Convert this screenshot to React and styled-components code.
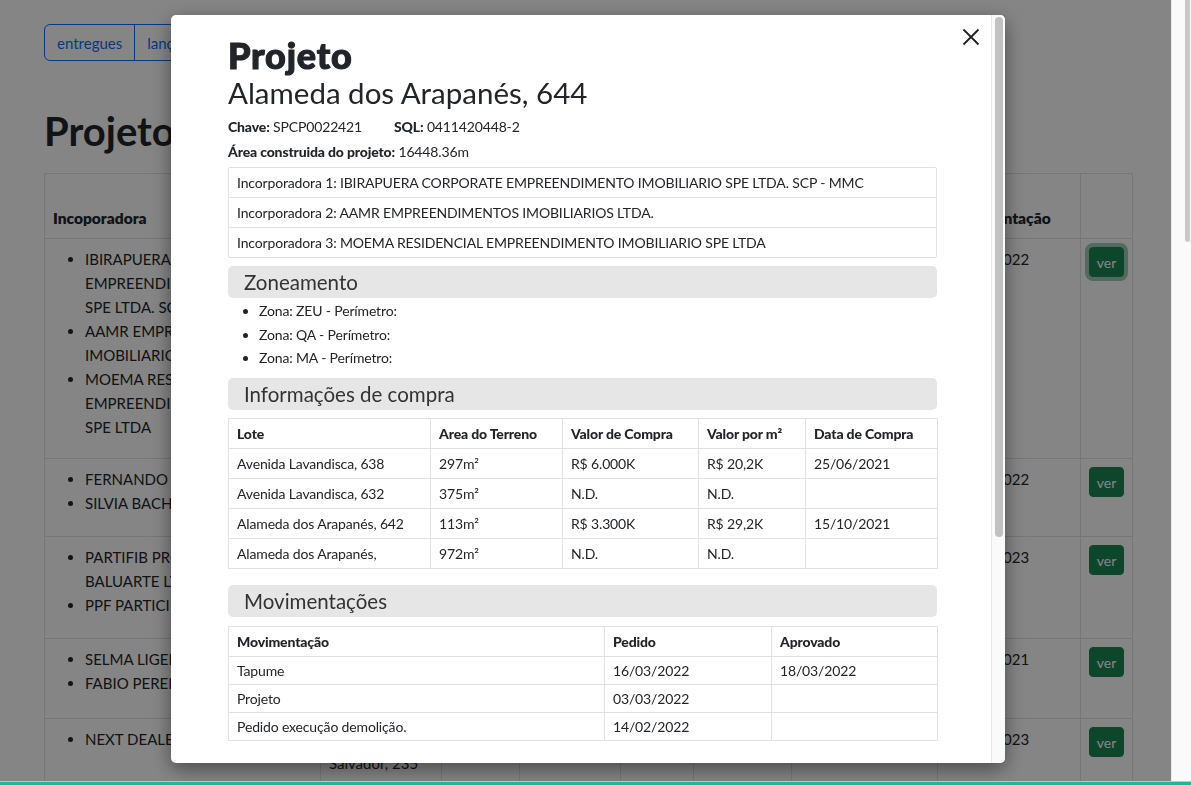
import React from 'react';
import styled, { createGlobalStyle } from 'styled-components';

const GlobalStyle = createGlobalStyle`
  html, body { margin: 0; height: 100%; overflow: hidden; }
  body {
    font-family: Lato, "Noto Sans", sans-serif;
    color: #212529;
    background: #fff;
  }
  * { box-sizing: border-box; }
`;

const Screen = styled.div`
  display: flex;
  width: 1191px;
  height: 785px;
  overflow: hidden;
`;

const Page = styled.main`
  flex: 1;
  min-width: 0;
  padding: 24px 0 0 44px;
  overflow: hidden;
`;

const PageScrollbar = styled.div`
  width: 20px;
  background: #fafafa;
  border-left: 1px solid #ececec;
  display: flex;
  justify-content: flex-end;
  padding-right: 1px;
`;

const PageThumb = styled.div`
  width: 5px;
  height: 242px;
  border-radius: 0 0 3px 3px;
  background: #c9c9c9;
`;

const BtnGroup = styled.div`
  display: inline-flex;
`;

const OutlineBtn = styled.button`
  font-family: inherit;
  font-size: 15px;
  line-height: 24px;
  padding: 5.5px 12px;
  color: #0d6efd;
  background: transparent;
  border: 1px solid #0d6efd;
  margin-left: -1px;
  &:first-child { margin-left: 0; border-radius: 6px 0 0 6px; }
  &:last-child { border-radius: 0 6px 6px 0; }
`;

const PageTitle = styled.h1`
  font-size: 40px;
  font-weight: 700;
  line-height: 48px;
  margin: 46px 0 18px;
`;

const BgTable = styled.table`
  width: 1088px;
  border-collapse: collapse;
  table-layout: fixed;
  font-size: 15px;
  line-height: 24px;

  th, td {
    border: 1px solid #dee2e6;
    padding: 8px;
    text-align: left;
    vertical-align: top;
    white-space: nowrap;
    overflow: hidden;
  }
  th {
    vertical-align: bottom;
    font-size: 15.5px;
    font-weight: 800;
    height: 64px;
  }
`;

const BgRow = styled.tr`
  height: ${p => p.$h}px;
`;

const Bullets = styled.ul`
  margin: 0 0 10px;
  padding-left: 32px;
`;

const VerBtn = styled.button`
  font-family: inherit;
  font-size: 14px;
  width: 35px;
  height: 30px;
  padding: 0;
  color: #fff;
  background: #198754;
  border: 1px solid #198754;
  border-radius: 4px;
  box-shadow: ${p => (p.$focus ? '0 0 0 4px rgba(60, 153, 110, 0.5)' : 'none')};
`;

const Backdrop = styled.div`
  position: fixed;
  top: 0;
  left: 0;
  bottom: 0;
  right: 20px;
  background: rgba(0, 0, 0, 0.48);
  display: flex;
  align-items: flex-start;
  padding: 15px 0 0 171px;
`;

const Modal = styled.div`
  position: relative;
  width: 834px;
  height: 748px;
  background: #fff;
  border-radius: 5px;
  box-shadow: 0 6px 20px rgba(0, 0, 0, 0.45);
  display: flex;
  overflow: hidden;
  letter-spacing: -0.15px;
`;

const ModalBody = styled.div`
  flex: 1;
  min-width: 0;
  padding: 21px 54px 0 57px;
  overflow: hidden;
`;

const ModalScroll = styled.div`
  width: 14px;
  background: #fafafa;
  border-left: 1px solid #e8e8e8;
  padding: 2px 2px 0 3px;
`;

const ModalThumb = styled.div`
  height: 520px;
  border-radius: 4px;
  background: #c1c1c1;
`;

const CloseBtn = styled.button`
  position: absolute;
  top: 12px;
  right: 24px;
  width: 20px;
  height: 20px;
  padding: 0;
  border: 0;
  background: transparent;
  display: flex;
  align-items: center;
  justify-content: center;
`;

const Title = styled.h2`
  margin: 0;
  font-size: 36px;
  font-weight: 900;
  line-height: 39px;
  letter-spacing: 0.8px;
  -webkit-text-stroke: 1.1px #212529;
`;

const Address = styled.h3`
  margin: 0;
  font-size: 29.5px;
  font-weight: 400;
  line-height: 35px;
  letter-spacing: 0;
`;

const MetaRow = styled.div`
  display: flex;
  gap: 32px;
  margin-top: ${p => p.$top}px;
  font-size: 14px;
  line-height: 21px;
`;

const Label = styled.b`
  font-weight: 900;
`;

const ListGroup = styled.ul`
  list-style: none;
  margin: 5px 0 0;
  padding: 0;
  border: 1px solid #dee2e6;
  border-radius: 2px;
`;

const ListItem = styled.li`
  padding: 4px 8px;
  font-size: 14px;
  line-height: 21px;
  & + & { border-top: 1px solid #dee2e6; }
`;

const SectionHeader = styled.div`
  margin-top: ${p => p.$top}px;
  background: #e6e6e6;
  border-radius: 5px;
  padding: 0 16px;
  font-size: 20.5px;
  line-height: 32px;
  letter-spacing: 0;
  color: #333;
`;

const ZoneList = styled.ul`
  margin: 1px 0 0;
  padding-left: 31px;
  font-size: 14px;
  line-height: 23.5px;
`;

const InfoTable = styled.table`
  width: 100%;
  margin-top: ${p => p.$top}px;
  border-collapse: collapse;
  table-layout: fixed;
  font-size: 14px;
  line-height: 21px;

  th, td {
    border: 1px solid #dee2e6;
    padding: ${p => p.$pad}px 8px;
    text-align: left;
    vertical-align: top;
    white-space: nowrap;
  }
  th {
    font-weight: 900;
    padding-top: 4px;
    padding-bottom: 4px;
  }
`;

const FooterLine = styled.div`
  position: fixed;
  left: 0;
  right: 0;
  bottom: 0;
  height: 4px;
  background: #27b399;
  border-top: 1px solid #8fdccc;
`;

const bgCols = [276, 121, 78, 101, 73, 98, 146, 143, 52];

const bgRows = [
  {
    h: 220,
    inc: [
      ['IBIRAPUERA CORPORATE', 'EMPREENDIMENTO IMOBILIARIO', 'SPE LTDA. SCP - MMC'],
      ['AAMR EMPREENDIMENTOS', 'IMOBILIARIOS LTDA.'],
      ['MOEMA RESIDENCIAL', 'EMPREENDIMENTO IMOBILIARIO', 'SPE LTDA'],
    ],
    addr: ['Alameda dos', 'Arapanés, 644'],
    date: '14/02/2022',
    focus: true,
  },
  {
    h: 78,
    inc: [['FERNANDO JOSE DA SILVA'], ['SILVIA BACHIEGA']],
    addr: ['Rua Gaivota, 81'],
    date: '09/08/2022',
  },
  {
    h: 102,
    inc: [['PARTIFIB PROJETO', 'BALUARTE LTDA'], ['PPF PARTICIPACOES']],
    addr: ['Rua Canário, 120'],
    date: '22/02/2023',
  },
  {
    h: 80,
    inc: [['SELMA LIGEIRO'], ['FABIO PEREIRA']],
    addr: ['Rua Inhambu, 900'],
    date: '30/11/2021',
  },
  {
    h: 70,
    inc: [['NEXT DEALER LTDA']],
    addr: ['Rua', 'Salvador, 235'],
    date: '17/01/2023',
  },
];

const bgHeads = [['Incoporadora'], ['Endereço'], ['Zona'], ['Área'], ['Lotes'], ['Valor'], ['Alvará'], ['Última', 'Movimentação'], ['']];

const compraRows = [
  ['Avenida Lavandisca, 638', '297m²', 'R$ 6.000K', 'R$ 20,2K', '25/06/2021'],
  ['Avenida Lavandisca, 632', '375m²', 'N.D.', 'N.D.', ''],
  ['Alameda dos Arapanés, 642', '113m²', 'R$ 3.300K', 'R$ 29,2K', '15/10/2021'],
  ['Alameda dos Arapanés,', '972m²', 'N.D.', 'N.D.', ''],
];

const movRows = [
  ['Tapume', '16/03/2022', '18/03/2022'],
  ['Projeto', '03/03/2022', ''],
  ['Pedido execução demolição.', '14/02/2022', ''],
];

const incorporadoras = [
  'IBIRAPUERA CORPORATE EMPREENDIMENTO IMOBILIARIO SPE LTDA. SCP - MMC',
  'AAMR EMPREENDIMENTOS IMOBILIARIOS LTDA.',
  'MOEMA RESIDENCIAL EMPREENDIMENTO IMOBILIARIO SPE LTDA',
];

const zonas = ['ZEU', 'QA', 'MA'];

const Lines = ({ lines }) =>
  lines.map((l, i) => (
    <React.Fragment key={i}>
      {i > 0 && <br />}
      {l}
    </React.Fragment>
  ));

const BackgroundPage = () => (
  <Page>
    <BtnGroup>
      <OutlineBtn>entregues</OutlineBtn>
      <OutlineBtn>lançamentos</OutlineBtn>
    </BtnGroup>
    <PageTitle>Projetos</PageTitle>
    <BgTable>
      <colgroup>
        {bgCols.map((w, i) => <col key={i} style={{ width: w }} />)}
      </colgroup>
      <thead>
        <tr>
          {bgHeads.map((h, i) => <th key={i}><Lines lines={h} /></th>)}
        </tr>
      </thead>
      <tbody>
        {bgRows.map((r, i) => (
          <BgRow key={i} $h={r.h}>
            <td>
              <Bullets>
                {r.inc.map((it, j) => (
                  <li key={j}><Lines lines={it} /></li>
                ))}
              </Bullets>
            </td>
            <td><Lines lines={r.addr} /></td>
            <td>ZEU</td>
            <td>-</td>
            <td>-</td>
            <td>-</td>
            <td>-</td>
            <td>{r.date}</td>
            <td><VerBtn $focus={r.focus}>ver</VerBtn></td>
          </BgRow>
        ))}
      </tbody>
    </BgTable>
  </Page>
);

const CloseIcon = () => (
  <svg width="18" height="18" viewBox="0 0 18 18">
    <path d="M1.5 1.5 L16.5 16.5 M16.5 1.5 L1.5 16.5" stroke="#1f1f1f" strokeWidth="1.8" fill="none" />
  </svg>
);

const ProjectModal = () => (
  <Modal>
    <ModalBody>
      <Title>Projeto</Title>
      <Address>Alameda dos Arapanés, 644</Address>
      <MetaRow $top={6}>
        <span><Label>Chave:</Label> SPCP0022421</span>
        <span><Label>SQL:</Label> 0411420448-2</span>
      </MetaRow>
      <MetaRow $top={4}>
        <span><Label>Área construida do projeto:</Label> 16448.36m</span>
      </MetaRow>
      <ListGroup>
        {incorporadoras.map((n, i) => (
          <ListItem key={i}>Incorporadora {i + 1}: {n}</ListItem>
        ))}
      </ListGroup>

      <SectionHeader $top={8}>Zoneamento</SectionHeader>
      <ZoneList>
        {zonas.map(z => <li key={z}>Zona: {z} - Perímetro:</li>)}
      </ZoneList>

      <SectionHeader $top={8}>Informações de compra</SectionHeader>
      <InfoTable $top={8} $pad={4}>
        <colgroup>
          <col style={{ width: 202 }} />
          <col style={{ width: 132 }} />
          <col style={{ width: 136 }} />
          <col style={{ width: 107 }} />
          <col style={{ width: 132 }} />
        </colgroup>
        <thead>
          <tr>
            <th>Lote</th>
            <th>Area do Terreno</th>
            <th>Valor de Compra</th>
            <th>Valor por m²</th>
            <th>Data de Compra</th>
          </tr>
        </thead>
        <tbody>
          {compraRows.map((r, i) => (
            <tr key={i}>
              {r.map((c, j) => <td key={j}>{c}</td>)}
            </tr>
          ))}
        </tbody>
      </InfoTable>

      <SectionHeader $top={16}>Movimentações</SectionHeader>
      <InfoTable $top={9} $pad={3}>
        <colgroup>
          <col style={{ width: 376 }} />
          <col style={{ width: 167 }} />
          <col style={{ width: 166 }} />
        </colgroup>
        <thead>
          <tr>
            <th>Movimentação</th>
            <th>Pedido</th>
            <th>Aprovado</th>
          </tr>
        </thead>
        <tbody>
          {movRows.map((r, i) => (
            <tr key={i}>
              {r.map((c, j) => <td key={j}>{c}</td>)}
            </tr>
          ))}
        </tbody>
      </InfoTable>
    </ModalBody>
    <ModalScroll>
      <ModalThumb />
    </ModalScroll>
    <CloseBtn aria-label="Fechar"><CloseIcon /></CloseBtn>
  </Modal>
);

export default function App() {
  return (
    <>
      <GlobalStyle />
      <Screen>
        <BackgroundPage />
        <PageScrollbar>
          <PageThumb />
        </PageScrollbar>
      </Screen>
      <Backdrop>
        <ProjectModal />
      </Backdrop>
      <FooterLine />
    </>
  );
}
